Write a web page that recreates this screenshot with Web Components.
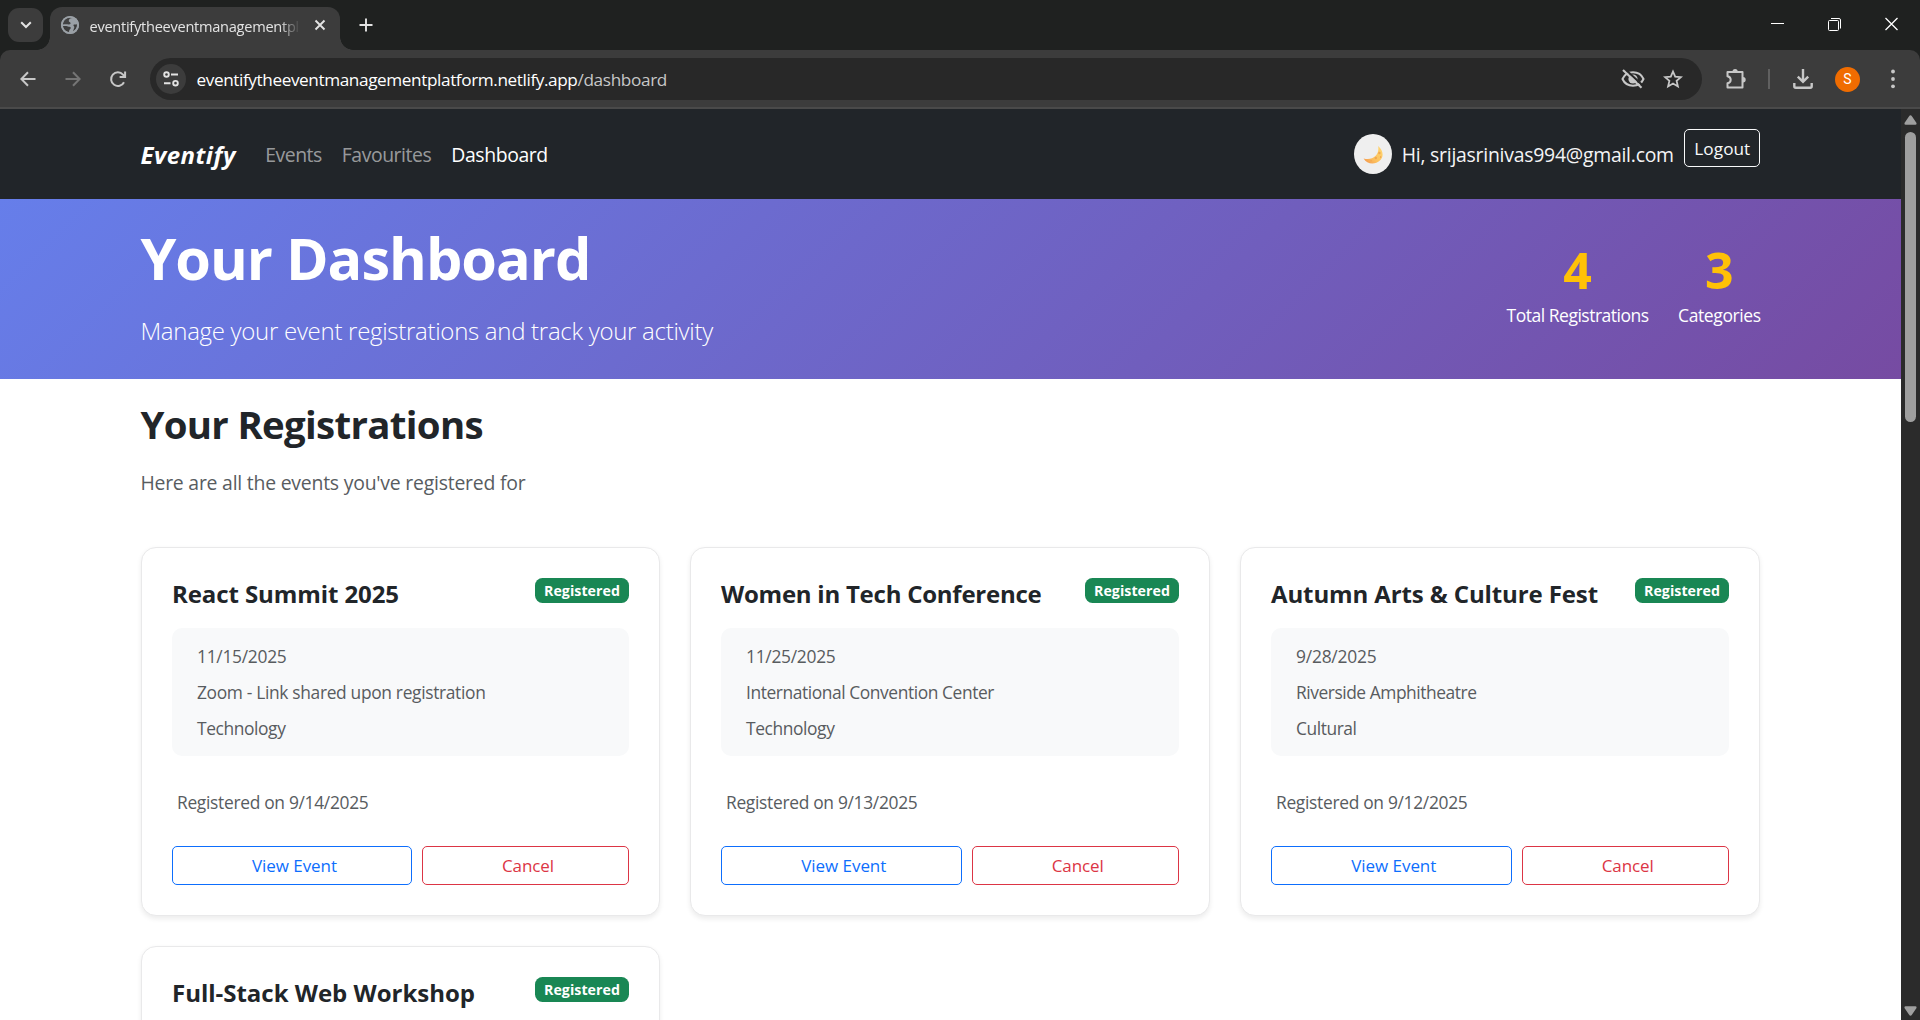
<!DOCTYPE html>
<html lang="en">
<head>
<meta charset="utf-8">
<title>Eventify Dashboard</title>
<style>
html,body{margin:0;padding:0;height:1020px;overflow:hidden;background:#fff}
body{font-family:"Open Sans","Noto Sans",sans-serif;color:#212529}
</style>
</head>
<body>
<browser-window>
  <event-navbar></event-navbar>
  <dashboard-hero></dashboard-hero>
  <registration-section>
    <registration-card name="React Summit 2025" name-w="227" date="11/15/2025" date-w="89.5" place="Zoom - Link shared upon registration" place-w="288.5" kind="Technology" kind-w="88.5" on="9/14/2025"></registration-card>
    <registration-card name="Women in Tech Conference" name-w="320.5" date="11/25/2025" date-w="89.5" place="International Convention Center" place-w="248" kind="Technology" kind-w="88.5" on="9/13/2025"></registration-card>
    <registration-card name="Autumn Arts &amp; Culture Fest" name-w="327" date="9/28/2025" date-w="80.5" place="Riverside Amphitheatre" place-w="180.5" kind="Cultural" kind-w="60.5" on="9/12/2025"></registration-card>
    <registration-card name="Full-Stack Web Workshop" name-w="303"></registration-card>
  </registration-section>
</browser-window>
<script>
const define = (tag, render) => customElements.define(tag, class extends HTMLElement {
  constructor() {
    super();
    this.attachShadow({ mode: 'open' }).innerHTML = render(this);
  }
});
const esc = s => (s || '').replace(/&/g, '&amp;');

define('browser-tabstrip', () => `
<style>
:host{display:flex;height:50px;background:#1f2120;align-items:flex-start}
.search{width:35px;height:34px;margin:8px 7px 0 8px;border-radius:11px;background:#3c3c3c;display:flex;align-items:center;justify-content:center}
.tab{width:290px;height:43px;margin-top:7px;background:#3c3c3c;border-radius:12px 12px 0 0;display:flex;align-items:center;box-sizing:border-box;padding:0 13px 7px 10px;position:relative}
.tab::before,.tab::after{content:"";position:absolute;bottom:0;width:13px;height:13px}
.tab::before{left:-13px;background:radial-gradient(circle at 0 0,transparent 12.5px,#3c3c3c 13px)}
.tab::after{right:-13px;background:radial-gradient(circle at 100% 0,transparent 12.5px,#3c3c3c 13px)}
.title{margin-left:9.500px;width:211px;overflow:hidden;color:#e3e3e3;font-size:14.600px;line-height:24px;padding-top:1px;-webkit-mask-image:linear-gradient(90deg,#000 190px,transparent 210px)}
.close{margin-left:13.500px}
.plus{margin:18px 0 0 19px}
svg{display:block}
.win{margin-left:auto;display:flex;padding-right:1px}
.win svg{margin:17px 22.500px 0 21px}
.win svg:nth-child(-n+2){margin:17px 23px 0 20.500px}
.win svg:last-child{margin-right:21.500px}
</style>
<div class="search"><svg width="12" height="8" fill="none" stroke="#e3e3e3" stroke-width="2"><path d="M1.2 1.2 6 6l4.800-4.800"/></svg></div>
<div class="tab">
  <svg width="20" height="20" viewBox="0 0 20 20"><circle cx="10" cy="10" r="9" fill="#9aa0a6"/><path fill="#3c3c3c" d="M12.500 3.100c-2.300.3-3.800 1-3.700 2.900.1 1.200 1.700.9 1.800 2.100.1.900-.6 1.500-1.800 1.400-1.900-.1-3.300-.5-5.900.1.200-3.900 2.600-6.600 6.500-7.200l2.100-.1z" opacity=".95"/><path fill="#3c3c3c" d="M3 10.900h3.300c1.300 0 1.900.8 3.200.9 1.900.2 1.500 1.900.3 2.600-.8.500-.4 1.500-.9 2.500C5.600 16.500 3.300 14 3 10.900zM17 9.300c-1.300.5-3.200-.1-3.500.8-.3 1.100 1.200 1.300.8 2.500l-1.300 3.600c2.500-1 4.200-3.600 4-6.900z"/><circle cx="10" cy="10" r="8.200" fill="none" stroke="#9aa0a6" stroke-width="1.800"/></svg>
  <div class="title"><fit-text w="209.500">eventifytheeventmanagementpl</fit-text></div>
  <svg class="close" width="12" height="12" stroke="#e3e3e3" stroke-width="1.900"><path d="m1.500 1.500 9 9m0-9-9 9"/></svg>
</div>
<svg class="plus" width="14" height="14" stroke="#e3e3e3" stroke-width="1.900"><path d="M7 .5v13M.5 7h13"/></svg>
<div class="win">
  <svg width="13" height="14" stroke="#fff"><path d="M0 6.500h13"/></svg>
  <svg width="13" height="14" stroke="#fff" fill="none"><rect x=".5" y="3.500" width="10" height="10" rx="1"/><path d="M3 1.500h8q1.500 0 1.500 1.500v8.500"/></svg>
  <svg width="13" height="14" stroke="#fff" stroke-width="1.300"><path d="m.5 1 12 12m0-12-12 12"/></svg>
</div>`);

define('browser-toolbar', () => `
<style>
:host{display:block;height:59px;background:#1f2120}
.bar{display:flex;height:57px;background:#3c3c3c;border-radius:10px 10px 0 0;border-bottom:2px solid #4a4a4a;padding-left:5px}
svg{display:block}
.c{width:45px;height:58px;display:flex;align-items:center;justify-content:center;flex:none}
.omni{display:flex;align-items:center;box-sizing:border-box;width:1552px;height:42px;margin:8px 12px 0 10px;border-radius:21px;background:#282828;padding:0 19.500px 0 6px}
.site{width:30px;height:30px;border-radius:50%;background:#3c3c3c;display:flex;align-items:center;justify-content:center;margin-right:10.500px}
.url{font-size:17.200px;line-height:26px;color:#fff;display:flex;padding-top:2px}
.path{color:#c7c7c7}
.eye{margin-left:auto;margin-right:18px}
.av{width:25px;height:25px;border-radius:50%;background:#f06c00;color:#fff;font:14px/25px Roboto,sans-serif;text-align:center}
</style>
<div class="bar">
  <div class="c"><svg width="16" height="16" fill="none" stroke="#c7c7c7" stroke-width="2"><path d="M15.500 8H1.500M8 1.200 1.400 8 8 14.800"/></svg></div>
  <div class="c"><svg width="16" height="16" fill="none" stroke="#757575" stroke-width="2"><path d="M.5 8h14M8 1.200 14.600 8 8 14.800"/></svg></div>
  <div class="c"><svg width="18" height="18" fill="none" stroke="#c7c7c7" stroke-width="2"><path d="M15 12.200A6.800 6.800 0 1 1 14 4.600L16 7M16.100 1.500V7h-5.500"/></svg></div>
  <div class="omni">
    <div class="site"><svg width="16" height="16" fill="none" stroke="#e3e3e3" stroke-width="1.900"><circle cx="3.500" cy="3.500" r="2.300"/><path d="M8 3.500h7M1 12.200h6.500"/><circle cx="12.500" cy="12.200" r="2.300"/></svg></div>
    <div class="url"><fit-text w="381">eventifytheeventmanagementplatform.netlify.app</fit-text><fit-text class="path" w="89.500">/dashboard</fit-text></div>
    <svg class="eye" width="24" height="20" viewBox="0 0 24 20"><ellipse cx="12" cy="10" rx="4.600" ry="4.500" fill="#c7c7c7"/><path d="M1.500 10C3.400 5.700 7.300 3.300 12 3.300S20.600 5.700 22.500 10C20.600 14.300 16.700 16.700 12 16.700S3.400 14.300 1.500 10z" fill="none" stroke="#c7c7c7" stroke-width="2"/><path d="M3.600-.2 22.800 17.500" stroke="#282828" stroke-width="2.200"/><path d="M2 1 20.500 18.800" stroke="#c7c7c7" stroke-width="2.100"/></svg>
    <svg width="20" height="20" viewBox="0 0 20 20" fill="none" stroke="#c7c7c7" stroke-width="1.800"><path d="m10 2.500 2.200 5.200 5.700.5-4.300 3.700 1.300 5.500-4.900-2.900-4.900 2.900 1.300-5.500-4.300-3.700 5.700-.5z"/></svg>
  </div>
  <div class="c" style="width:44px"><svg width="22" height="22" viewBox="0 0 22 22"><path d="M2.500 4h15v15.500h-15v-4.200c2-.4 3.200-1.700 3.200-3.500S4.500 8.600 2.500 8.200z" fill="none" stroke="#c7c7c7" stroke-width="2" stroke-linejoin="round"/><path d="M7.500 3.500a2.600 2.600 0 0 1 5.200 0zM18 9a2.700 2.700 0 0 1 0 5.400z" fill="#c7c7c7"/></svg></div>
  <div class="c" style="width:22px"><svg width="2" height="20"><path d="M1 0v20" stroke="#606060" stroke-width="2"/></svg></div>
  <div class="c" style="width:45px"><svg width="20" height="20" fill="none" stroke="#c7c7c7" stroke-width="2.400"><path d="M10 0v12.500M4.800 7.700l5.200 5.200 5.200-5.200M1.300 14v3.300q0 1.400 1.400 1.400h14.600q1.400 0 1.400-1.400V14"/></svg></div>
  <div class="c" style="width:45px"><div class="av">S</div></div>
  <div class="c" style="width:45px"><svg width="4" height="20" fill="#c7c7c7"><circle cx="2" cy="2.500" r="1.900"/><circle cx="2" cy="10" r="1.900"/><circle cx="2" cy="17.300" r="1.900"/></svg></div>
</div>`);

define('page-scrollbar', () => `
<style>
:host{display:flex;flex-direction:column;align-items:center;width:19px;height:911px;background:#2b2b2b;box-sizing:border-box;padding:6px 0 4px 0}
.thumb{width:11px;height:290px;border-radius:6px;background:#9f9f9f;margin-top:7px}
.down{margin-top:auto}
svg{display:block}
</style>
<svg width="13" height="10"><path d="M6.500.3q.8 0 1.400.9L12.500 8q.5 1.700-1 1.700h-10Q0 9.700.5 8l4.600-6.800q.6-.9 1.400-.9z" fill="#9f9f9f"/></svg>
<div class="thumb"></div>
<svg class="down" width="13" height="10"><path d="M6.500 9.700q.8 0 1.400-.9L12.500 2q.5-1.700-1-1.700h-10Q0 .3.5 2l4.600 6.800q.6.900 1.400.9z" fill="#9f9f9f"/></svg>`);

define('browser-window', () => `
<style>
:host{display:flex;flex-direction:column;width:1920px;height:1020px;overflow:hidden}
.view{display:flex;height:911px}
.page{width:1901px;height:911px;overflow:hidden;background:#fff}
</style>
<browser-tabstrip></browser-tabstrip>
<browser-toolbar></browser-toolbar>
<div class="view"><div class="page"><slot></slot></div><page-scrollbar></page-scrollbar></div>`);

define('event-navbar', () => `
<style>
:host{display:flex;align-items:center;height:90px;background:#212529;padding:0 140.700px 0 140.400px;font-size:19.400px;line-height:30px}
.brand{font-weight:700;font-style:italic;font-size:24px;color:#fff;margin-right:29.400px;padding-top:1px}
nav{display:flex;gap:20px;color:rgba(255,255,255,.55);padding-top:1.500px}
.on{color:#fff}
.right{margin-left:auto;display:flex;align-items:center;color:#f4f4f5}
.moon{width:38px;height:40px;border-radius:50%;background:#efefef;margin-right:9.500px;display:flex;align-items:center;justify-content:center}
.hi{padding-top:1.500px;margin-right:10.500px}
.out{box-sizing:border-box;width:76px;height:38px;border:1px solid #f8f9fa;border-radius:5px;margin-bottom:12px;font-size:17.200px;line-height:38px;text-align:center;color:#f8f9fa}
</style>
<div class="brand"><fit-text w="95.500">Eventify</fit-text></div>
<nav><fit-text w="56.500">Events</fit-text><fit-text w="89.500">Favourites</fit-text><fit-text class="on" w="96.500">Dashboard</fit-text></nav>
<div class="right">
  <div class="moon"><svg width="20" height="20" viewBox="0 0 20 20"><defs><linearGradient id="m" x1="1" y1="0" x2="0" y2="1"><stop offset="0" stop-color="#ffd873"/><stop offset=".6" stop-color="#fcc15e"/><stop offset="1" stop-color="#f3924b"/></linearGradient></defs><g transform="translate(.6 2)"><path fill="url(#m)" d="M14.500 0c5.200 4.200 6 10.600 1.800 14.500C11.800 18.900 3.300 18.600 0 12.500c4.300 1.300 9 .6 11.800-2.400C14.400 7.500 15.300 3.900 14.500 0z"/><circle cx="15.800" cy="7" r="1.200" fill="#f0a850"/><circle cx="12.200" cy="12" r="1.200" fill="#f0a850"/><circle cx="7.500" cy="14.800" r=".8" fill="#f0a850"/><circle cx="17" cy="11" r=".7" fill="#ea9a4d"/></g></svg></div>
  <div class="hi"><fit-text w="272">Hi, srijasrinivas994@gmail.com</fit-text></div>
  <div class="out"><fit-text w="56">Logout</fit-text></div>
</div>`);

define('hero-stat', el => `
<style>
:host{display:flex;flex-direction:column;align-items:center;gap:2px;color:#fff}
.n{font-size:50px;line-height:60px;font-weight:700;color:#ffc107}
.l{font-size:17.500px;line-height:27px}
</style>
<div class="n"><slot></slot></div>
<div class="l"><fit-text w="${el.getAttribute('label-w')}">${el.getAttribute('label')}</fit-text></div>`);

define('dashboard-hero', () => `
<style>
:host{display:flex;justify-content:space-between;height:180px;padding:0 140.400px;background:linear-gradient(135deg,#667eea 0%,#764ba2 100%);color:#fff}
h1{margin:22.700px 0 18.500px;font-size:57.600px;line-height:72px;font-weight:700}
p{margin:0;font-size:24px;line-height:37px;font-weight:300}
.stats{display:flex;gap:29.500px;padding-top:41px}
</style>
<div><h1><fit-text w="450">Your Dashboard</fit-text></h1><p><fit-text w="572.500">Manage your event registrations and track your activity</fit-text></p></div>
<div class="stats"><hero-stat label="Total Registrations" label-w="142">4</hero-stat><hero-stat label="Categories" label-w="82.5">3</hero-stat></div>`);

define('registration-section', () => `
<style>
:host{display:block;padding:21px 140.400px 0}
h2{margin:0 0 20px;font-size:38.400px;line-height:48px;font-weight:700}
p{margin:0 0 49px;font-size:19.400px;line-height:30px;color:#585c5f}
.grid{display:grid;grid-template-columns:519px 520px 520px;gap:30px;padding-left:.6px}
</style>
<h2><fit-text w="342.500">Your Registrations</fit-text></h2>
<p><fit-text w="385">Here are all the events you've registered for</fit-text></p>
<div class="grid"><slot></slot></div>`);

define('outline-button', () => `
<style>
:host{display:block;box-sizing:border-box;height:39px;border:1px solid var(--c);border-radius:5px;color:var(--c);font-size:17px;line-height:37px;text-align:center;padding-left:5px}
</style><slot></slot>`);

define('registration-card', el => {
  const a = n => esc(el.getAttribute(n));
  return `
<style>
:host{display:block;box-sizing:border-box;height:369px;border:1px solid #e9e9ea;border-radius:15px;padding:30px;background:#fff;box-shadow:0 2.500px 5px rgba(0,0,0,.075);color:#585c5f;font-size:17.400px}
.head{display:flex;justify-content:space-between;align-items:flex-start;height:50px;color:#212529}
h3{margin:1px 0 0;font-size:24px;line-height:30px;font-weight:700;white-space:nowrap}
.badge{width:94px;height:25px;border-radius:7.500px;background:#198754;color:#fff;font-size:14.200px;font-weight:700;line-height:25px;text-align:center}
.info{box-sizing:border-box;height:128px;border-radius:10px;background:#f8f9fa;padding:10px 25px;line-height:36px}
.when{line-height:27px;margin:33px 0 30px 5px}
.row{display:grid;grid-template-columns:240fr 207fr;gap:10px}
</style>
<div class="head"><h3><fit-text w="${a('name-w')}">${a('name')}</fit-text></h3><div class="badge"><fit-text w="76">Registered</fit-text></div></div>
${el.hasAttribute('on') ? `<div class="info"><div><fit-text w="${a('date-w')}">${a('date')}</fit-text></div><div><fit-text w="${a('place-w')}">${a('place')}</fit-text></div><div><fit-text w="${a('kind-w')}">${a('kind')}</fit-text></div></div>
<div class="when"><fit-text w="191.500">Registered on ${a('on')}</fit-text></div>
<div class="row"><outline-button style="--c:#0d6efd"><fit-text w="85">View Event</fit-text></outline-button><outline-button style="--c:#dc3545"><fit-text w="52">Cancel</fit-text></outline-button></div>` : ''}`;
});

/* A single line of text whose tracking is adjusted to fill the width given in "w". */
customElements.define('fit-text', class extends HTMLElement {
  constructor() {
    super();
    this.attachShadow({ mode: 'open' }).innerHTML =
      '<style>:host{display:inline-block;white-space:pre;vertical-align:top;font-kerning:normal;font-variant-ligatures:none}</style><span><slot></slot></span>';
  }
  connectedCallback() {
    const w = parseFloat(this.getAttribute('w'));
    const span = this.shadowRoot.querySelector('span');
    const n = this.textContent.length;
    const natural = span.getBoundingClientRect().width;
    if (!w || !natural) return;
    span.style.letterSpacing = ((w - natural) / n).toFixed(4) + 'px';
    this.style.width = w + 'px';
  }
});
</script>
</body>
</html>
